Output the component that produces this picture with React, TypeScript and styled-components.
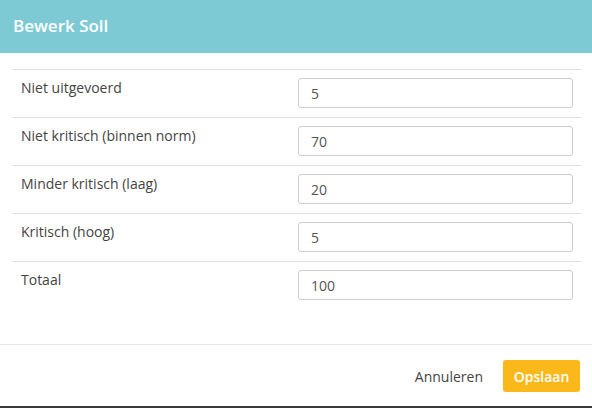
import React from "react";
import styled, { createGlobalStyle } from "styled-components";

const Global = createGlobalStyle`
  html, body { margin: 0; padding: 0; background: #3a3a3a; }
  body { font-family: "Open Sans", "DejaVu Sans", sans-serif; }
  * { box-sizing: border-box; }
`;

const Modal = styled.div`
  width: 592px;
  height: 406px;
  background: #fff;
  display: flex;
  flex-direction: column;
`;

const Header = styled.div`
  height: 53px;
  background: #7dcad5;
  display: flex;
  align-items: center;
  padding: 0 13px 2px;
`;

const Title = styled.h4`
  margin: 0;
  color: #fff;
  font-size: 17px;
  font-weight: 600;
`;

const Body = styled.div`
  flex: 1;
  padding: 16px 11px 0 13px;
`;

const Table = styled.div`
  display: flex;
  flex-direction: column;
`;

const Row = styled.div`
  display: grid;
  grid-template-columns: 277px 1fr;
  border-top: 1px solid #dddddd;
  height: 48px;
`;

const Label = styled.div`
  padding: 8px 8px 0;
  font-size: 14px;
  line-height: 20px;
  color: #444;
`;

const Cell = styled.div`
  padding: 8px 8px 0;
`;

const Input = styled.input`
  width: 100%;
  height: 30px;
  border: 1px solid #cccccc;
  border-radius: 3px;
  padding: 0 12px;
  font-family: "Open Sans", "DejaVu Sans", sans-serif;
  font-size: 14px;
  color: #555;
  outline: none;
`;

const Footer = styled.div`
  border-top: 1px solid #e5e5e5;
  padding: 15px 12px 14px;
  display: flex;
  justify-content: flex-end;
  align-items: center;
  gap: 8px;
`;

const LinkButton = styled.button`
  background: none;
  border: none;
  height: 32px;
  padding: 0 12px;
  font-family: "Open Sans", "DejaVu Sans", sans-serif;
  font-size: 14px;
  color: #444;
  cursor: pointer;
`;

const PrimaryButton = styled.button`
  background: #fbb81b;
  border: none;
  border-radius: 3px;
  height: 32px;
  width: 77px;
  font-family: "Open Sans", "DejaVu Sans", sans-serif;
  font-size: 14px;
  font-weight: 600;
  color: #fff;
  cursor: pointer;
`;

const rows = [
  { label: "Niet uitgevoerd", value: "5" },
  { label: "Niet kritisch (binnen norm)", value: "70" },
  { label: "Minder kritisch (laag)", value: "20" },
  { label: "Kritisch (hoog)", value: "5" },
  { label: "Totaal", value: "100" },
];

export default function App() {
  return (
    <>
      <Global />
      <Modal>
        <Header>
          <Title>Bewerk Soll</Title>
        </Header>
        <Body>
          <Table>
            {rows.map((r) => (
              <Row key={r.label}>
                <Label>{r.label}</Label>
                <Cell>
                  <Input defaultValue={r.value} />
                </Cell>
              </Row>
            ))}
          </Table>
        </Body>
        <Footer>
          <LinkButton>Annuleren</LinkButton>
          <PrimaryButton>Opslaan</PrimaryButton>
        </Footer>
      </Modal>
    </>
  );
}
